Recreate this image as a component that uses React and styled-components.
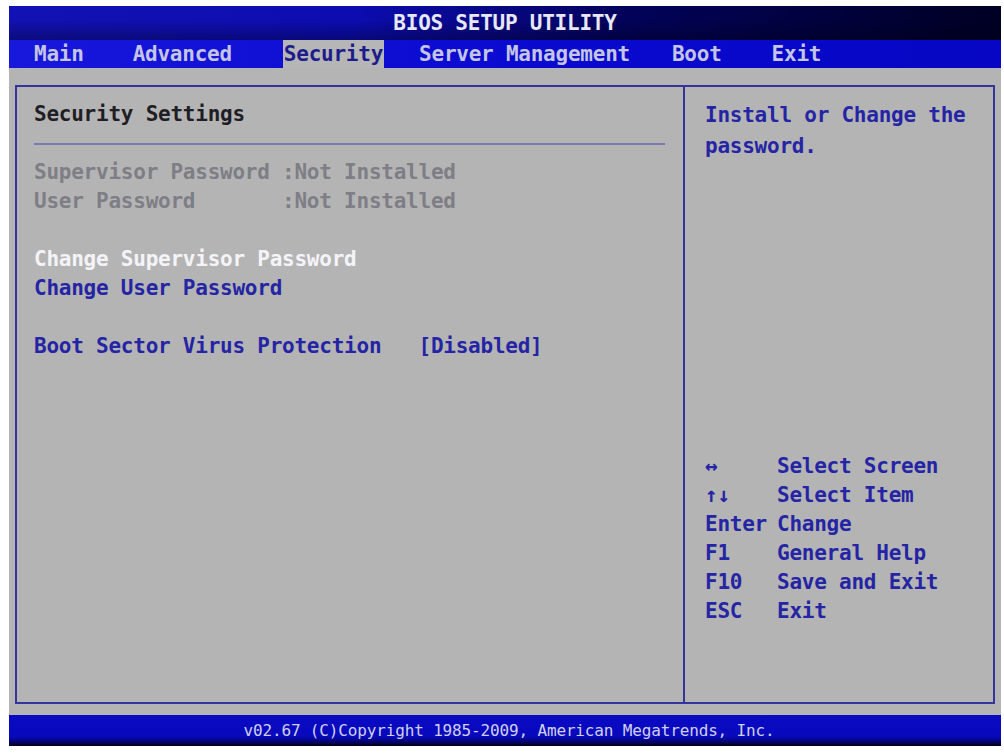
import React from "react";
import styled, { createGlobalStyle } from "styled-components";

const GlobalStyle = createGlobalStyle`
    html, body {
        margin: 0;
        padding: 0;
        background: #ffffff;
    }
    body {
        font-family: "DejaVu Sans Mono", "Liberation Mono", monospace;
    }
`;

const Screen = styled.div`
    display: flex;
    flex-direction: column;
    width: 992px;
    margin: 6px 0 0 9px;
    font-family: "DejaVu Sans Mono", "Liberation Mono", monospace;
    font-weight: bold;
    font-size: 21px;
    letter-spacing: -0.24px;
`;

const TitleBar = styled.div`
    height: 34px;
    display: flex;
    align-items: center;
    justify-content: center;
    color: #e8e8f4;
    background:
        linear-gradient(to bottom, rgba(0, 0, 0, 0) 40%, rgba(0, 0, 20, 0.35) 100%),
        linear-gradient(to right, #1212b4 0%, #0c0cb0 35%, #02025a 62%, #000024 100%);
`;

const MenuBar = styled.div`
    height: 28px;
    display: flex;
    align-items: stretch;
    background: linear-gradient(to right, #1818dc 0%, #0a0ad0 50%, #0606c4 100%);
`;

const MenuItem = styled.div`
    display: flex;
    align-items: center;
    margin-left: ${({ $ml }) => $ml}px;
    padding: 0 1px;
    color: ${({ $active }) => ($active ? "#1c1c8c" : "#c4c4e4")};
    background: ${({ $active }) => ($active ? "#b6b6b6" : "transparent")};
`;

const Body = styled.div`
    height: 647px;
    box-sizing: border-box;
    padding: 17px 6px 11px 6px;
    background: #b4b4b4;
    display: flex;
`;

const Frame = styled.div`
    flex: 1;
    display: grid;
    grid-template-columns: 666px 1fr;
    border: 2px solid #34349c;
`;

const LeftPanel = styled.div`
    display: flex;
    flex-direction: column;
    padding: 13px 18px 0 17px;
`;

const RightPanel = styled.div`
    display: flex;
    flex-direction: column;
    justify-content: space-between;
    border-left: 2px solid #34349c;
    padding: 13px 10px 76px 20px;
`;

const Row = styled.div`
    height: 29px;
    line-height: 29px;
    white-space: pre;
    color: ${({ $tone }) =>
        $tone === "gray" ? "#7e7e86" : $tone === "white" ? "#f4f4f8" : $tone === "dark" ? "#1e1e24" : "#2424a4"};
`;

const Spacer = styled.div`
    height: 29px;
`;

const Separator = styled.div`
    height: 29px;
    display: flex;
    align-items: center;

    &::after {
        content: "";
        flex: 1;
        height: 2px;
        background: #7a7aae;
    }
`;

const HelpText = styled.div`
    color: #2424a4;
    line-height: 31px;
    width: 270px;
`;

const KeyList = styled.div`
    display: flex;
    flex-direction: column;
`;

const KeyRow = styled.div`
    display: grid;
    grid-template-columns: 72px 1fr;
    height: 29px;
    line-height: 29px;
    color: #2424a4;
    white-space: pre;
`;

const Footer = styled.div`
    height: 31px;
    display: flex;
    align-items: center;
    justify-content: center;
    padding-left: 8px;
    font-size: 16px;
    font-weight: normal;
    letter-spacing: -0.15px;
    color: #d0d0ec;
    background: linear-gradient(to bottom, #0a0ac4 0%, #0808bc 70%, #04045a 90%, #000010 100%);
`;

const menu = [
    { label: "Main", ml: 24 },
    { label: "Advanced", ml: 47 },
    { label: "Security", ml: 50, active: true },
    { label: "Server Management", ml: 34 },
    { label: "Boot", ml: 40 },
    { label: "Exit", ml: 48 },
];

const keys = [
    ["\u2194", "Select Screen"],
    ["\u2191\u2193", "Select Item"],
    ["Enter", "Change"],
    ["F1", "General Help"],
    ["F10", "Save and Exit"],
    ["ESC", "Exit"],
];

const App = () => {
    return (
        <>
            <GlobalStyle />
            <Screen>
                <TitleBar>BIOS SETUP UTILITY</TitleBar>
                <MenuBar>
                    {menu.map((m) => (
                        <MenuItem key={m.label} $ml={m.ml} $active={m.active}>
                            {m.label}
                        </MenuItem>
                    ))}
                </MenuBar>
                <Body>
                    <Frame>
                        <LeftPanel>
                            <Row $tone="dark">Security Settings</Row>
                            <Separator />
                            <Row $tone="gray">Supervisor Password :Not Installed</Row>
                            <Row $tone="gray">User Password       :Not Installed</Row>
                            <Spacer />
                            <Row $tone="white">Change Supervisor Password</Row>
                            <Row>Change User Password</Row>
                            <Spacer />
                            <Row>Boot Sector Virus Protection   [Disabled]</Row>
                        </LeftPanel>
                        <RightPanel>
                            <HelpText>Install or Change the password.</HelpText>
                            <KeyList>
                                {keys.map(([k, d]) => (
                                    <KeyRow key={k}>
                                        <span>{k}</span>
                                        <span>{d}</span>
                                    </KeyRow>
                                ))}
                            </KeyList>
                        </RightPanel>
                    </Frame>
                </Body>
                <Footer>v02.67 (C)Copyright 1985-2009, American Megatrends, Inc.</Footer>
            </Screen>
        </>
    );
};

export default App;
